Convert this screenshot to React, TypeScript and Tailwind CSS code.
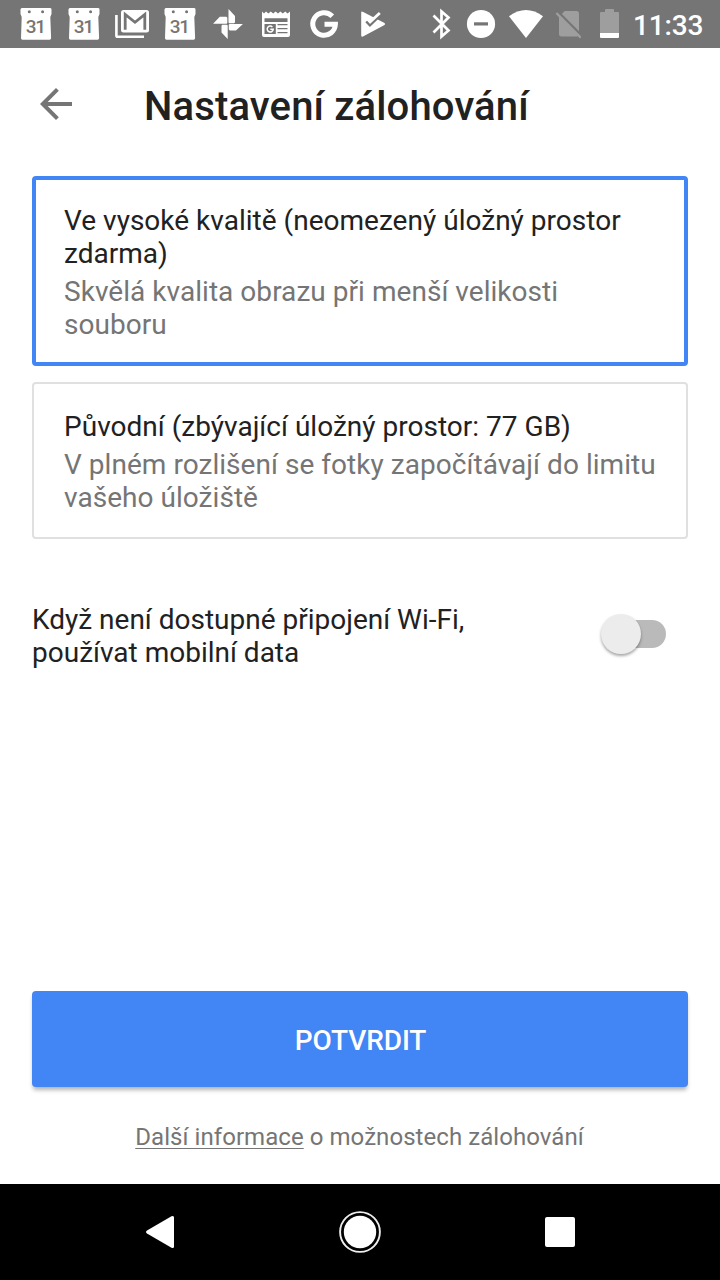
import type { ReactNode } from 'react';

function Glyph({ width = 48, children }: { width?: number; children: ReactNode }) {
  return (
    <svg width={width} height={48} viewBox={`0 0 ${width} 48`} fill="white" className="shrink-0">
      {children}
    </svg>
  );
}

function CalendarIcon() {
  return (
    <Glyph>
      <path
        fillRule="evenodd"
        d="M10 8h28a1.500 1.500 0 0 1 1.500 1.800V14l-1.200 3 .8 21a1.600 1.600 0 0 1-1.600 1.700H10.600A1.600 1.600 0 0 1 9 38l.7-21-1.200-3V9.500A1.600 1.600 0 0 1 10 8ZM17.300 10.300a1.500 1.500 0 1 0 0 3 1.500 1.500 0 0 0 0-3Zm13.300 0a1.500 1.500 0 1 0 0 3 1.500 1.500 0 0 0 0-3Z"
      />
      <text x="23.300" y="33.300" textAnchor="middle" fill="#757575" fontSize="19" fontWeight="500" letterSpacing="-1.200" fontFamily="Roboto, sans-serif">
        31
      </text>
    </Glyph>
  );
}

function MailStackIcon() {
  return (
    <Glyph>
      <path d="M8.400 15v20.500a1.300 1.300 0 0 0 1.300 1.300H36" fill="none" stroke="white" strokeWidth="2.600" />
      <rect x="13" y="10" width="28" height="22.500" rx="2.500" />
      <path d="M17.200 29.800V14.500L27 22.300l9.800-7.800V29.800" fill="none" stroke="#757575" strokeWidth="2.800" />
    </Glyph>
  );
}

function PinwheelIcon() {
  return (
    <Glyph>
      <path d="M24.500 9l6.500 7v6.500l-1 .7h-4.800l-.7-.8zM38.900 24l-6.900 6.500h-6.200l-1-.9v-4.900l.7-.7zM23.700 38.900l-6.200-6.500v-6.600l.8-1h4.700l.7.800zM9.100 23.700l6.700-6.900h6.600l.9.900v5.300l-.7.700z" />
    </Glyph>
  );
}

function NewsIcon() {
  return (
    <Glyph>
      <path d="M10 11.500l2 2 2-2 2.400 2 2.400-2 2.400 2 2.400-2 2.400 2 2.400-2 2.400 2 2.400-2 2.400 2 2.400-2V35a2 2 0 0 1-2 2H12a2 2 0 0 1-2-2Z" />
      <g fill="#757575">
        <path d="M12.500 18.300h23V22h-23zM12.500 24h11.300v10H12.500zM25.500 24h10v1.300h-10zM25.500 28h10v1.300h-10zM25.500 32h10v1.300h-10z" />
      </g>
      <path d="M20.400 26.900a3 3 0 1 0 .8 2.400H18.300" fill="none" stroke="white" strokeWidth="1.500" />
    </Glyph>
  );
}

function SearchLogo() {
  return (
    <Glyph>
      <path d="M32.300 16.200A11.300 11.300 0 1 0 35.400 24.300H24.500" fill="none" stroke="white" strokeWidth="5" />
    </Glyph>
  );
}

function PlayCheckIcon() {
  return (
    <Glyph>
      <path d="M13.200 12.500Q13.300 10.800 15.200 12L36.500 23Q37.800 24 36.500 25L15 36.600Q13.300 37.200 13.200 35.500Z" />
      <path d="M18.200 21.500l3.700 3.900 11.700-11.300" fill="none" stroke="#757575" strokeWidth="2.400" />
      <path d="M20.700 19.800l1.600 2L31.800 13" fill="none" stroke="white" strokeWidth="2.800" />
    </Glyph>
  );
}

function BluetoothIcon() {
  return (
    <Glyph width={24}>
      <path d="M4.500 15.500l15 15-7 6V11.500l7 6-15 15" fill="none" stroke="white" strokeWidth="2.700" />
    </Glyph>
  );
}

function DisturbIcon() {
  return (
    <Glyph width={30}>
      <circle cx="15" cy="24" r="14.100" />
      <path d="M8 22.300h14v3.200H8z" fill="#757575" />
    </Glyph>
  );
}

function WifiIcon() {
  return (
    <Glyph width={36}>
      <path d="M1 16.200Q18 3.700 35 16.200L18 38Z" />
    </Glyph>
  );
}

function NoSimIcon() {
  return (
    <Glyph width={28}>
      <path d="M11.700 11h11.800a2.500 2.500 0 0 1 2.500 2.500V34a2.500 2.500 0 0 1-2.500 2.500h-15A2.500 2.500 0 0 1 6 34V16.700Z" fill="#9e9e9e" />
      <path d="M4.500 11.300L30 37" stroke="#757575" strokeWidth="2.600" />
      <path d="M3.400 13L27.800 37.800" stroke="#9e9e9e" strokeWidth="2.300" />
    </Glyph>
  );
}

function BatteryIcon() {
  return (
    <Glyph width={20}>
      <path d="M6 9h7a1 1 0 0 1 1 1v2h4a1 1 0 0 1 1 1v20H0V13a1 1 0 0 1 1-1h4V10a1 1 0 0 1 1-1Z" fill="#9e9e9e" />
      <path d="M0 33h19v4a1 1 0 0 1-1 1H1a1 1 0 0 1-1-1Z" />
    </Glyph>
  );
}

function StatusBar() {
  return (
    <div className="flex h-12 shrink-0 bg-[#757575] pl-3 text-white">
      <CalendarIcon />
      <CalendarIcon />
      <MailStackIcon />
      <CalendarIcon />
      <PinwheelIcon />
      <NewsIcon />
      <SearchLogo />
      <PlayCheckIcon />
      <div className="ml-[33px] flex">
        <BluetoothIcon />
        <span className="w-[13px]" />
        <DisturbIcon />
        <span className="w-[12px]" />
        <WifiIcon />
        <span className="w-[9px]" />
        <NoSimIcon />
        <span className="w-[19px]" />
        <BatteryIcon />
      </div>
      <span className="ml-[13px] text-[28px] leading-[52px] font-medium tracking-[-0.15px]">11:33</span>
    </div>
  );
}

function Option({ title, detail, className }: { title: ReactNode; detail: ReactNode; className: string }) {
  return (
    <button className={`flex w-full flex-col gap-[5px] rounded-[4px] text-left text-[28px] leading-[33px] ${className}`}>
      <span className="block tracking-[0.015px] text-[#212121]">{title}</span>
      <span className="block tracking-[0.04px] whitespace-nowrap text-[#757575]">{detail}</span>
    </button>
  );
}

export default function App() {
  return (
    <div className="flex h-[1280px] w-[720px] flex-col overflow-hidden bg-white font-['Roboto',sans-serif]">
      <StatusBar />
      <header className="flex h-28 shrink-0 items-center pl-10">
        <svg width="32" height="32" viewBox="0 0 32 32" fill="none" stroke="#757575" strokeWidth="4">
          <path d="M32 16H3M17.400 1.400L2.800 16l14.600 14.600" />
        </svg>
        <h1 className="ml-[72px] pt-1.5 text-[40px] leading-[48px] font-medium tracking-[0.15px] text-[#212121]">Nastavení zálohování</h1>
      </header>
      <main className="flex flex-1 flex-col px-8 pt-4">
        <Option
          className="h-[190px] border-4 border-[#4285f4] px-7 pt-6"
          title={<>Ve vysoké kvalitě (neomezený úložný prostor<br />zdarma)</>}
          detail={<>Skvělá kvalita obrazu při menší velikosti<br />souboru</>}
        />
        <Option
          className="mt-4 h-[157px] border-2 border-[#e0e0e0] pt-[26px] pl-[30px]"
          title="Původní (zbývající úložný prostor: 77 GB)"
          detail={<>V plném rozlišení se fotky započítávají do limitu<br />vašeho úložiště</>}
        />
        <div className="mt-16 flex items-start justify-between pr-[22px]">
          <p className="text-[28px] leading-[33px] text-[#212121]">
            Když není dostupné připojení Wi-Fi,<br />používat mobilní data
          </p>
          <div className="mt-[11px] flex h-10 w-[65px] items-center">
            <span className="z-10 size-10 shrink-0 rounded-full bg-[#ececec] shadow-[0_2px_3px_rgba(0,0,0,0.35)]" />
            <span className="-ml-[19px] h-7 w-11 shrink-0 rounded-full bg-[#bababa]" />
          </div>
        </div>
        <button className="mt-auto h-24 shrink-0 rounded-[4px] bg-[#4285f4] pt-1 pl-px text-[28px] font-medium tracking-[-0.1px] text-white shadow-[0_4px_4px_-1px_rgba(0,0,0,0.3)]">
          POTVRDIT
        </button>
        <p className="mt-9 mb-8 pr-px text-center text-[24px] leading-[29px] tracking-[0.06px] text-[#757575]">
          <a className="underline decoration-1 underline-offset-[3px] [text-decoration-skip-ink:none]">Další informace</a> o možnostech zálohování
        </p>
      </main>
      <nav className="flex h-24 shrink-0 items-center bg-black pl-[140px]">
        <svg width="40" height="40" viewBox="0 0 40 40" fill="white">
          <path d="M31.500 4.300Q34 3.300 34 5.500v29Q34 36.700 31.500 35.700L7 21.500Q5 20 7 18.500Z" />
        </svg>
        <svg className="ml-[159px]" width="42" height="42" viewBox="0 0 42 42" fill="white">
          <circle cx="21" cy="21" r="16.200" />
          <circle cx="21" cy="21" r="19.900" fill="none" stroke="#eeeeee" strokeWidth="1.900" />
        </svg>
        <span className="ml-[164px] size-[30px] rounded-[2px] bg-white" />
      </nav>
    </div>
  );
}
